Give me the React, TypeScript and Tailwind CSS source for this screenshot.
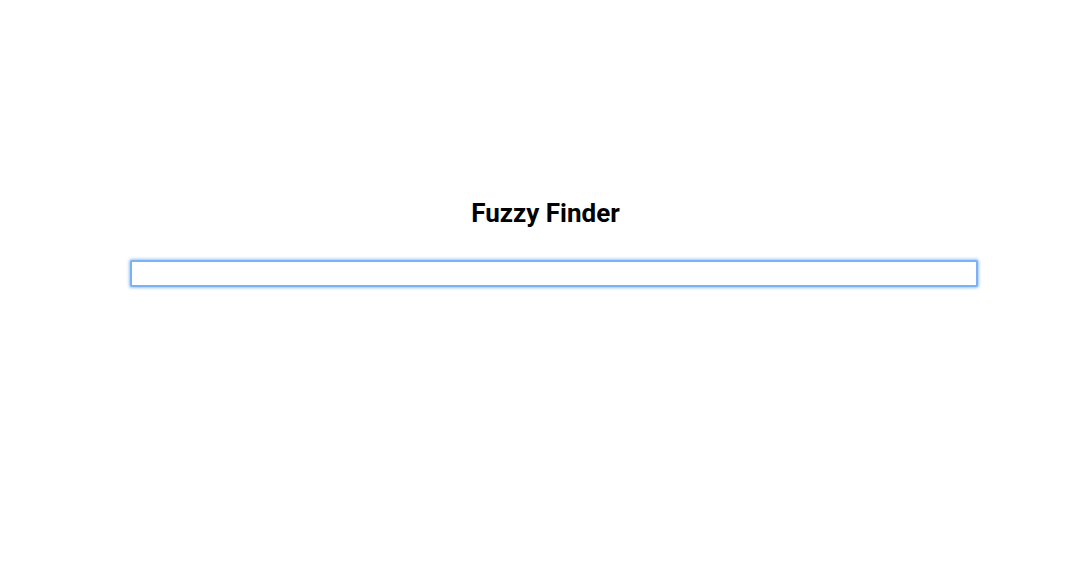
export default function App() {
  return (
    <div className="min-h-[568px] w-full bg-white flex flex-col pt-[197px]">
      <h1
        className="text-center text-[26px] font-bold text-black leading-[32px]"
        style={{ fontFamily: 'Roboto, "Liberation Sans", sans-serif' }}
      >
        Fuzzy Finder
      </h1>
      <div className="mt-[31px] pl-[130px]">
        <input
          type="text"
          autoFocus
          className="block w-[848px] h-[27px] border-2 border-[#7ab1f7] rounded-[2px] bg-white shadow-[0_0_3px_1px_rgba(110,168,246,0.7)] outline-none"
        />
      </div>
    </div>
  );
}
